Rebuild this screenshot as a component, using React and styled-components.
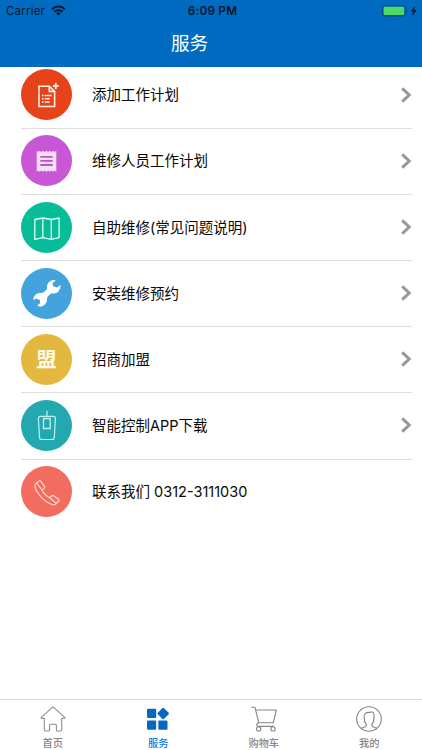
import styled, { createGlobalStyle } from 'styled-components';
import { useState } from 'react';

const services = [
  { id: 'plan', label: '添加工作计划', color: '#e84318', icon: <PlanIcon />, arrow: true },
  { id: 'staff', label: '维修人员工作计划', color: '#c757d5', icon: <ReceiptIcon />, arrow: true },
  { id: 'faq', label: '自助维修(常见问题说明)', color: '#06bd98', icon: <MapIcon />, arrow: true },
  { id: 'install', label: '安装维修预约', color: '#44a3dc', icon: <WrenchIcon />, arrow: true },
  { id: 'join', label: '招商加盟', color: '#e4b73e', icon: <JoinIcon />, arrow: true },
  { id: 'app', label: '智能控制APP下载', color: '#23a8b0', icon: <RemoteIcon />, arrow: true },
  { id: 'contact', label: '联系我们 0312-3111030', color: '#f26d60', icon: <PhoneIcon />, arrow: false },
];

const tabs = [
  { id: 'home', label: '首页', icon: <HomeIcon /> },
  { id: 'service', label: '服务', icon: <GridIcon /> },
  { id: 'cart', label: '购物车', icon: <CartIcon /> },
  { id: 'mine', label: '我的', icon: <UserIcon /> },
];

export default function App() {
  const [activeTab, setActiveTab] = useState('service');

  return (
    <>
      <GlobalStyle />
      <Screen>
        <Header>
          <StatusBar>
            <Carrier>
              Carrier
              <WifiIcon />
            </Carrier>
            <Clock>6:09 PM</Clock>
            <BatteryWrap>
              <BatteryIcon />
            </BatteryWrap>
          </StatusBar>
          <Title>服务</Title>
        </Header>
        <ServiceList>
          {services.map(service => (
            <ServiceRow key={service.id}>
              <IconCircle $color={service.color}>{service.icon}</IconCircle>
              <ServiceName>{service.label}</ServiceName>
              {service.arrow && <ArrowIcon />}
            </ServiceRow>
          ))}
        </ServiceList>
        <TabBar>
          {tabs.map(tab => (
            <Tab
              key={tab.id}
              $active={tab.id === activeTab}
              onClick={() => setActiveTab(tab.id)}
            >
              {tab.icon}
              <TabLabel>{tab.label}</TabLabel>
            </Tab>
          ))}
        </TabBar>
      </Screen>
    </>
  );
}

function WifiIcon() {
  return (
    <svg width="15" height="11" viewBox="0 0 15 11" fill="none" stroke="#06162b" strokeWidth="2">
      <path d="M1 4.2a9.4 9.4 0 0 1 13 0" />
      <path d="M3.4 6.8a5.9 5.9 0 0 1 8.2 0" />
      <path d="M7.5 10.6 5.3 8.4a3.2 3.2 0 0 1 4.4 0z" fill="#06162b" stroke="none" />
    </svg>
  );
}

function BatteryIcon() {
  return (
    <svg width="36" height="12" viewBox="0 0 36 12">
      <rect x="0.6" y="0.8" width="22.6" height="10.2" rx="2.4" fill="none" stroke="#064684" />
      <rect x="1.6" y="1.8" width="20.6" height="8.2" rx="1.2" fill="#4cd964" />
      <path d="M24.4 4.2c1.4.5 1.4 3 0 3.5z" fill="#064684" />
      <path d="M33 1 28.8 6.6h2.4L30.2 11l4.5-6H32z" fill="#06162b" />
    </svg>
  );
}

function ArrowIcon() {
  return (
    <svg width="12" height="16" viewBox="0 0 12 16" fill="none" stroke="#989898" strokeWidth="3">
      <path d="M2.2 1.3 9.2 8l-7 6.7" />
    </svg>
  );
}

function PlanIcon() {
  return (
    <svg width="51" height="51" viewBox="0 0 51 51" fill="none" stroke="#fff0e9" strokeWidth="1.6">
      <path d="M28.3 17.2H18v20.3h15.6V22.4z" />
      <path d="M28.3 17.2v5.2h5.3" />
      <path d="M34.8 14.1v5.8M31.9 17h5.8" strokeWidth="1.8" />
      <path d="M21 26.5h1.5m1.2 0h7M21 29.8h1.5m1.2 0h5M21 33h1.5m1.2 0h5" />
    </svg>
  );
}

function ReceiptIcon() {
  return (
    <svg width="51" height="51" viewBox="0 0 51 51">
      <path
        fill="#f4dff7"
        d="M15.7 15.7l1.3 1.2 1.6-1.2 1.6 1.2 1.7-1.2 1.6 1.2 2-1.2 1.7 1.2 1.6-1.2 1.6 1.2 1.7-1.2 1.6 1.2 1.6-1.2v21l-1.6-1.2-1.6 1.2-1.7-1.2-1.6 1.2-1.6-1.2-1.7 1.2-2-1.2-1.6 1.2-1.7-1.2-1.6 1.2-1.6-1.2-1.3 1.2z"
      />
      <path d="M19.3 21.8h12.4M19.3 25.9h12.4M19.3 30h12.4" stroke="#b855c8" strokeWidth="1.8" />
    </svg>
  );
}

function MapIcon() {
  return (
    <svg width="51" height="51" viewBox="0 0 51 51" fill="none" stroke="#e2fff8" strokeWidth="1.3" strokeLinejoin="round">
      <path d="M13.8 17.5l8-1.5 8.5 1.5 7.8-1.5v19.6l-7.8 1.8-8.5-1.8-8 1.8z" />
      <path d="M21.8 16v19.6M30.3 17.5v19.9" />
    </svg>
  );
}

function WrenchIcon() {
  return (
    <svg width="51" height="51" viewBox="0 0 51 51">
      <path
        fill="#fff"
        d="M34.6 12.2c-3-.6-6.2.7-7.7 3.3-1 1.7-1.1 3.3-.7 5.1-.7 1.7-3.7 4.3-5.4 4.5-2.3-.5-4.7.1-6.4 1.8-1.4 1.4-2.1 3.2-2.1 5.1l2.9-1.6 3.7 1.7.1 3.2-2.9 2.4c2.5 1.3 5.8.8 7.9-1.3 1.7-1.7 2.3-3.9 1.9-6.1.6-1.9 3.2-4.5 5.1-5 2.3.4 4.6-.2 6.3-1.9 1.7-1.7 2.6-4.2 2.1-6.5l-3.3 2.6-4.1-1.2-.5-3.1z"
      />
    </svg>
  );
}

function JoinIcon() {
  return <JoinMark>盟</JoinMark>;
}

function RemoteIcon() {
  return (
    <svg width="51" height="51" viewBox="0 0 51 51" fill="none" stroke="#bdf2f1" strokeWidth="1.2">
      <path d="M26 10.8v5.4M19.5 16.4h12.8q2.1 0 2.1 2.2l-1.1 18.8q-.2 2.1-2.2 2.1H20.7q-2 0-2.2-2.1l-1.1-18.8q0-2.2 2.1-2.2z" />
      <path d="M22.5 18.5h6.7v10h-6.7z" strokeWidth="1.3" />
    </svg>
  );
}

function PhoneIcon() {
  return (
    <svg width="51" height="51" viewBox="0 0 51 51" fill="none" stroke="#ffd8d1" strokeWidth="1.2" strokeLinejoin="round">
      <g transform="translate(-0.2 0.5)">
        <path d="M18.4 14.4 14.8 17.3c-1.3 1.7-.7 4.5 1.7 8.2 2.8 4.4 7 8.7 11.3 11.1 2.7 1.5 5.1 2.2 6.7 1.2l3.5-3.3q.5-.7-.1-1.4l-5.5-4q-.8-.4-1.5.2l-1.8 1.9c-2.5-.6-6.8-4.8-7.7-7.6l2.2-2.3q.5-.7 0-1.5l-3.7-5.2q-.7-.7-1.5-.2z" />
        <path d="M15.8 16.5l5.5 7.2M29.1 31.2l6.4 5.8" />
      </g>
    </svg>
  );
}

function HomeIcon() {
  return (
    <svg width="26" height="26" viewBox="0 0 26 26" fill="none" stroke="#8f8f8f" strokeWidth="1.1" strokeLinejoin="round">
      <path d="M13 .8 1.3 11.4q-.5.8.5 1H4.3v11.2q0 1.4 1.3 1.4h3.3q.7 0 .7-.8v-4.7q0-1.2 1.2-1.2h4.4q1.2 0 1.2 1.2v4.7q0 .8.7.8h3.3q1.3 0 1.3-1.4V12.4h2.5q1-.2.5-1z" />
    </svg>
  );
}

function GridIcon() {
  return (
    <svg width="26" height="26" viewBox="0 0 26 26" fill="#0768bd">
      <rect x="2" y="2.7" width="9.2" height="9.2" rx="1.2" />
      <rect x="2" y="14.6" width="9.2" height="9.2" rx="1.2" />
      <rect x="13.3" y="14.6" width="9.2" height="9.2" rx="1.2" />
      <rect x="13.9" y="3.2" width="8.6" height="8.6" rx="0.9" transform="rotate(45 18.2 7.5)" />
    </svg>
  );
}

function CartIcon() {
  return (
    <svg width="26" height="26" viewBox="0 0 26 26" fill="none" stroke="#858585" strokeWidth="1.1" strokeLinejoin="round">
      <path d="M.3 1.2h3.6l3.9 15.6h14.5l3-12.8H4.7" />
      <path d="M7.8 16.8c-2.8.4-2.9 3.6-.2 3.6h15.5" />
      <circle cx="7.7" cy="22.9" r="2.1" />
      <circle cx="22" cy="22.9" r="2.1" />
    </svg>
  );
}

function UserIcon() {
  return (
    <svg width="26" height="26" viewBox="0 0 26 26" fill="none" stroke="#858585" strokeWidth="1.1">
      <circle cx="13" cy="13" r="12.3" />
      <path d="M5.3 22.5c1.5-1.4 4.8-.9 5.2-3.6-1.4-1.6-2.4-4.5-2.4-7.8-.1-3 1.7-4.7 4.9-4.7 1.5 0 2-.6 3.3-.4 1.8.3 1.9 2.2 1.8 5.1 0 3.3-1 6.2-2.5 7.8.4 2.7 3.7 2.2 5.2 3.6" />
    </svg>
  );
}

const GlobalStyle = createGlobalStyle`
  * {
    box-sizing: border-box;
  }
  body {
    margin: 0;
    background: #fff;
    font-family: Inter, 'Noto Sans CJK SC', sans-serif;
  }
  svg {
    display: block;
    flex-shrink: 0;
  }
`;

const Screen = styled.div`
  display: flex;
  flex-direction: column;
  width: 422px;
  height: 750px;
  overflow: hidden;
`;

const Header = styled.header`
  position: relative;
  z-index: 1;
  flex-shrink: 0;
  height: 67px;
  background: #006bc0;
`;

const StatusBar = styled.div`
  display: grid;
  grid-template-columns: 1fr auto 1fr;
  align-items: center;
  height: 21px;
  padding: 0 4px 0 6px;
  color: #06162b;
  font-size: 11.5px;
`;

const Carrier = styled.div`
  display: flex;
  align-items: center;
  gap: 6px;
  letter-spacing: 0.2px;
`;

const Clock = styled.div`
  padding-left: 1px;
  font-size: 11.8px;
  font-weight: 600;
  letter-spacing: 0.2px;
`;

const BatteryWrap = styled.div`
  display: flex;
  justify-content: flex-end;
`;

const Title = styled.h1`
  margin: 0;
  padding-right: 43px;
  color: #fff;
  font-size: 18.6px;
  font-weight: 400;
  line-height: 44px;
  text-align: center;
`;

const ServiceList = styled.ul`
  flex: 1;
  margin: -4.3px 0 0;
  padding: 0 10px 0 21px;
  list-style: none;
`;

const ServiceRow = styled.li`
  display: flex;
  align-items: center;
  height: 66.15px;
  padding-bottom: 1px;
  border-bottom: 1px solid #dedede;
  &:last-child {
    border-bottom-color: transparent;
  }
`;

const IconCircle = styled.div`
  display: flex;
  align-items: center;
  justify-content: center;
  flex-shrink: 0;
  width: 51px;
  height: 51px;
  margin-right: 20px;
  border-radius: 50%;
  background: ${({ $color }) => $color};
`;

const JoinMark = styled.span`
  color: #fff8e5;
  font-size: 20.5px;
  font-weight: 700;
  line-height: 51px;
`;

const ServiceName = styled.span`
  flex: 1;
  padding-top: 1px;
  color: #080808;
  font-size: 14.5px;
  line-height: 20px;
`;

const TabBar = styled.nav`
  display: grid;
  grid-template-columns: repeat(4, 1fr);
  flex-shrink: 0;
  height: 51px;
  border-top: 1px solid #d9d9d9;
`;

const Tab = styled.button`
  display: flex;
  flex-direction: column;
  align-items: center;
  padding: 6px 0 0;
  border: none;
  background: transparent;
  color: ${({ $active }) => ($active ? '#0f7ae5' : '#868686')};
  font-family: inherit;
  font-size: 10.2px;
  font-weight: 500;
`;

const TabLabel = styled.span`
  margin-top: 4px;
  line-height: 14px;
`;
